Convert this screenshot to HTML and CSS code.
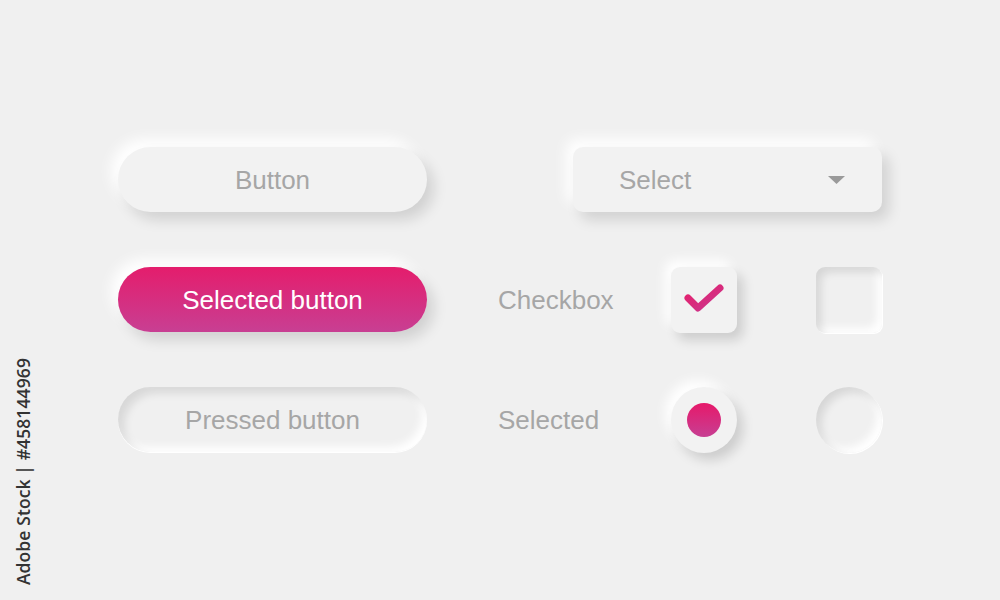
FILE: index.html
```html
<!DOCTYPE html>
<html>
<head>
<meta charset="utf-8">
<link rel="stylesheet" href="styles.css">
</head>
<body>
<main class="board">
  <div class="row">
    <div class="btn btn-raised">Button</div>
    <div class="select">
      <span>Select</span>
      <svg class="caret" width="17" height="8" viewBox="0 0 17 8"><path d="M0 0 H17 L8.5 8 Z" fill="#9a9a9a"/></svg>
    </div>
  </div>
  <div class="row">
    <div class="btn btn-selected">Selected button</div>
    <div class="label">Checkbox</div>
    <div class="box box-raised">
      <svg width="66" height="66" viewBox="0 0 66 66">
        <defs>
          <linearGradient id="chk" x1="0" y1="0" x2="1" y2="1">
            <stop offset="0" stop-color="#e61f6b"/>
            <stop offset="1" stop-color="#c9388f"/>
          </linearGradient>
        </defs>
        <polyline points="17,31 27,41 49,21" fill="none" stroke="url(#chk)" stroke-width="7" stroke-linejoin="round" stroke-linecap="round"/>
      </svg>
    </div>
    <div class="box box-pressed"></div>
  </div>
  <div class="row">
    <div class="btn btn-pressed">Pressed button</div>
    <div class="label">Selected</div>
    <div class="radio radio-raised"><span class="dot"></span></div>
    <div class="radio radio-pressed"></div>
  </div>
</main>
<div class="credit">Adobe Stock | #458144969</div>
</body>
</html>
```
FILE: styles.css
```css
html, body {
  margin: 0;
  padding: 0;
  width: 1000px;
  height: 600px;
  background: #f0f0f0;
  overflow: hidden;
  font-family: "Liberation Sans", Arial, sans-serif;
}

.board {
  display: flex;
  flex-direction: column;
  gap: 55px;
  padding: 147px 0 0 118px;
}

.row {
  display: flex;
  align-items: center;
  height: 65px;
}

.btn {
  width: 309px;
  height: 65px;
  border-radius: 33px;
  display: flex;
  align-items: center;
  justify-content: center;
  font-size: 26px;
  color: #a6a6a6;
  box-sizing: border-box;
  padding-top: 1px;
}

.btn-raised {
  background: #f2f2f2;
  box-shadow: 7px 8px 14px rgba(0, 0, 0, 0.13), -7px -8px 14px #ffffff;
}

.btn-selected {
  background: linear-gradient(180deg, #e41d6c 0%, #c83f93 100%);
  color: #ffffff;
  box-shadow: 7px 8px 14px rgba(0, 0, 0, 0.13), -7px -8px 14px #ffffff;
}

.btn-pressed {
  background: #f0f0f0;
  box-shadow: inset 6px 6px 8px rgba(0, 0, 0, 0.10), inset -5px -5px 8px #ffffff, 0 1px 0 #ffffff;
}

.select {
  width: 309px;
  height: 65px;
  margin-left: 146px;
  border-radius: 10px;
  background: #f2f2f2;
  box-shadow: 7px 8px 14px rgba(0, 0, 0, 0.13), -7px -8px 14px #ffffff;
  display: flex;
  align-items: center;
  justify-content: space-between;
  padding: 1px 37px 0 46px;
  box-sizing: border-box;
  font-size: 26px;
  color: #a6a6a6;
}

.caret {
  display: block;
  margin-top: 0;
}

.label {
  width: 173px;
  margin-left: 71px;
  font-size: 26px;
  color: #a6a6a6;
  padding-top: 1px;
}

.box, .radio {
  width: 66px;
  height: 66px;
  flex: none;
  box-sizing: border-box;
}

.box { border-radius: 9px; }
.radio {
  border-radius: 50%;
  display: flex;
  align-items: center;
  justify-content: center;
}

.box svg { display: block; }

.box-raised, .radio-raised {
  background: #f2f2f2;
  box-shadow: 6px 7px 12px rgba(0, 0, 0, 0.15), -6px -7px 12px #ffffff;
}

.box-pressed, .radio-pressed {
  margin-left: 79px;
  background: #f0f0f0;
  box-shadow: inset 5px 5px 8px rgba(0, 0, 0, 0.11), inset -5px -5px 8px #ffffff, 1px 1px 0 #ffffff;
}

.dot {
  width: 34px;
  height: 34px;
  border-radius: 50%;
  background: linear-gradient(180deg, #e6196a 0%, #c73f93 100%);
}

.credit {
  position: absolute;
  left: 11px;
  bottom: 15px;
  writing-mode: vertical-rl;
  transform: rotate(180deg);
  font-family: "Open Sans", "Noto Sans", sans-serif;
  font-size: 17.5px;
  font-weight: 600;
  color: #333333;
  letter-spacing: 0.1px;
}
```
